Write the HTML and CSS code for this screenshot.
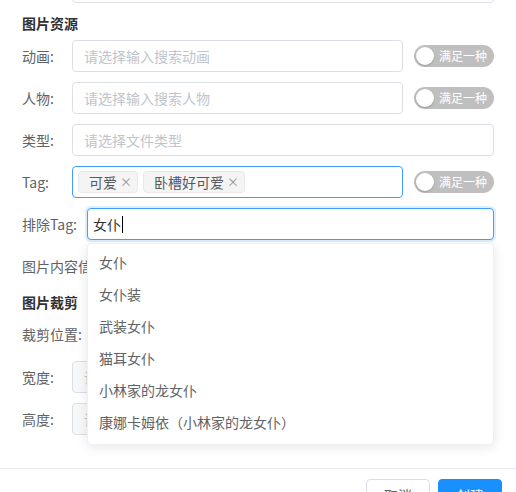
FILE: index.html
```html
<!DOCTYPE html>
<html lang="zh-CN">
<head>
<meta charset="utf-8">
<title>图片资源</title>
<link rel="stylesheet" href="styles.css">
</head>
<body>
<div class="page">
  <div class="content">
    <div class="inner">
      <div class="row first"><span class="label"></span><div class="input"></div></div>
      <div class="section">图片资源</div>
      <div class="row gap7">
        <span class="label">动画:</span>
        <div class="input"><span class="ph">请选择输入搜索动画</span></div>
        <div class="switch"><span class="knob"></span><span class="switch-text">满足一种</span></div>
      </div>
      <div class="row">
        <span class="label">人物:</span>
        <div class="input"><span class="ph">请选择输入搜索人物</span></div>
        <div class="switch"><span class="knob"></span><span class="switch-text">满足一种</span></div>
      </div>
      <div class="row">
        <span class="label">类型:</span>
        <div class="input"><span class="ph">请选择文件类型</span></div>
      </div>
      <div class="row">
        <span class="label">Tag:</span>
        <div class="input active tags">
          <span class="tag">可爱<span class="close">×</span></span>
          <span class="tag">卧槽好可爱<span class="close">×</span></span>
        </div>
        <div class="switch"><span class="knob"></span><span class="switch-text">满足一种</span></div>
      </div>
      <div class="row">
        <span class="label wide">排除Tag:</span>
        <div class="select-wrap">
          <div class="input focus"><span class="value">女仆</span><span class="caret"></span></div>
          <ul class="dropdown">
            <li>女仆</li>
            <li>女仆装</li>
            <li>武装女仆</li>
            <li>猫耳女仆</li>
            <li>小林家的龙女仆</li>
            <li>康娜卡姆依（小林家的龙女仆）</li>
          </ul>
        </div>
      </div>
      <div class="row">
        <span class="label">图片内容信息:</span>
        <div class="input"></div>
      </div>
      <div class="section sec2">图片裁剪</div>
      <div class="row gap6">
        <span class="label">裁剪位置:</span>
      </div>
      <div class="row gap11">
        <span class="label">宽度:</span>
        <div class="input gray"><span class="ph">请输入宽度</span></div>
      </div>
      <div class="row">
        <span class="label">高度:</span>
        <div class="input gray"><span class="ph">请输入高度</span></div>
      </div>
    </div>
  </div>
  <div class="footer">
    <button class="btn">取消</button>
    <button class="btn primary">创建</button>
  </div>
</div>
</body>
</html>
```

FILE: styles.css
```css
* { box-sizing: border-box; }
html, body {
  margin: 0;
  padding: 0;
  background: #fff;
  font-family: "Noto Sans CJK SC", "Noto Sans", sans-serif;
  font-size: 14px;
  color: #606266;
}
.page {
  width: 516px;
  height: 492px;
  overflow: hidden;
}
.content {
  height: 468px;
  overflow: hidden;
}
.inner {
  padding: 0 22px;
}
.row {
  display: flex;
  align-items: center;
  height: 32px;
  margin-top: 10px;
}
.row.first { margin-top: -29px; }
.row.gap7 { margin-top: 7px; }
.row.gap6 { margin-top: 6px; }
.row.gap11 { margin-top: 11px; }
.label {
  min-width: 50px;
  padding-right: 10px;
  white-space: nowrap;
  line-height: 20px;
  color: #606266;
  flex-shrink: 0;
}
.label.wide { width: 65px; }
.section {
  margin-top: 10px;
  height: 20px;
  line-height: 20px;
  font-weight: bold;
  color: #303133;
}
.input {
  flex: 1;
  height: 32px;
  border: 1px solid #dcdfe6;
  border-radius: 4px;
  display: flex;
  align-items: center;
  padding: 0 11px;
  background: #fff;
  min-width: 0;
}
.input.gray { background: #f7f8fa; }
.ph {
  color: #c0c4cc;
  white-space: nowrap;
  line-height: 20px;
}
.input.active { border-color: #409eff; }
.input.focus {
  border-color: #409eff;
  box-shadow: 0 0 0 2px rgba(64, 158, 255, 0.18);
  padding-left: 5px;
}
.value { color: #303133; line-height: 20px; }
.caret {
  display: inline-block;
  width: 1px;
  height: 17px;
  background: #000;
  margin-left: 1px;
}
.tags {
  padding-left: 5px;
  gap: 5px;
}
.tag {
  display: inline-flex;
  align-items: center;
  height: 22px;
  padding: 0 5px 0 10px;
  background: #f4f4f5;
  border: 1px solid #e9e9eb;
  border-radius: 4px;
  color: #555a62;
  line-height: 20px;
  white-space: nowrap;
}
.close {
  margin-left: 3px;
  color: #909399;
  font-size: 12px;
  line-height: 20px;
}
.switch {
  margin-left: 11px;
  width: 80px;
  height: 22px;
  border-radius: 11px;
  background: #bfbfbf;
  display: flex;
  align-items: center;
  padding-left: 2px;
  flex-shrink: 0;
}
.knob {
  width: 18px;
  height: 18px;
  border-radius: 50%;
  background: #fff;
  box-shadow: 0 1px 2px rgba(0,0,0,0.2);
}
.switch-text {
  margin-left: 5px;
  color: #fff;
  font-size: 12px;
  line-height: 16px;
  white-space: nowrap;
}
.select-wrap {
  flex: 1;
  position: relative;
  display: flex;
}
.dropdown {
  position: absolute;
  top: calc(100% + 3px);
  left: 0;
  right: 0;
  margin: 0;
  padding: 3px 0 5px;
  list-style: none;
  background: #fff;
  border: 1px solid #eef0f4;
  border-radius: 4px;
  box-shadow: 0 2px 12px rgba(0, 0, 0, 0.1);
  z-index: 10;
}
.dropdown li {
  height: 32px;
  line-height: 30px;
  padding-left: 11px;
  color: #606266;
  white-space: nowrap;
}
.footer {
  border-top: 1px solid #e4e7ed;
  display: flex;
  justify-content: flex-end;
  gap: 8px;
  padding: 10px 14px 0 0;
}
.btn {
  width: 64px;
  height: 32px;
  border: 1px solid #dcdfe6;
  border-radius: 4px;
  background: #fff;
  color: #606266;
  font-family: inherit;
  font-size: 14px;
  padding: 0;
}
.btn.primary {
  background: #1890ff;
  border-color: #1890ff;
  color: #fff;
}
```
